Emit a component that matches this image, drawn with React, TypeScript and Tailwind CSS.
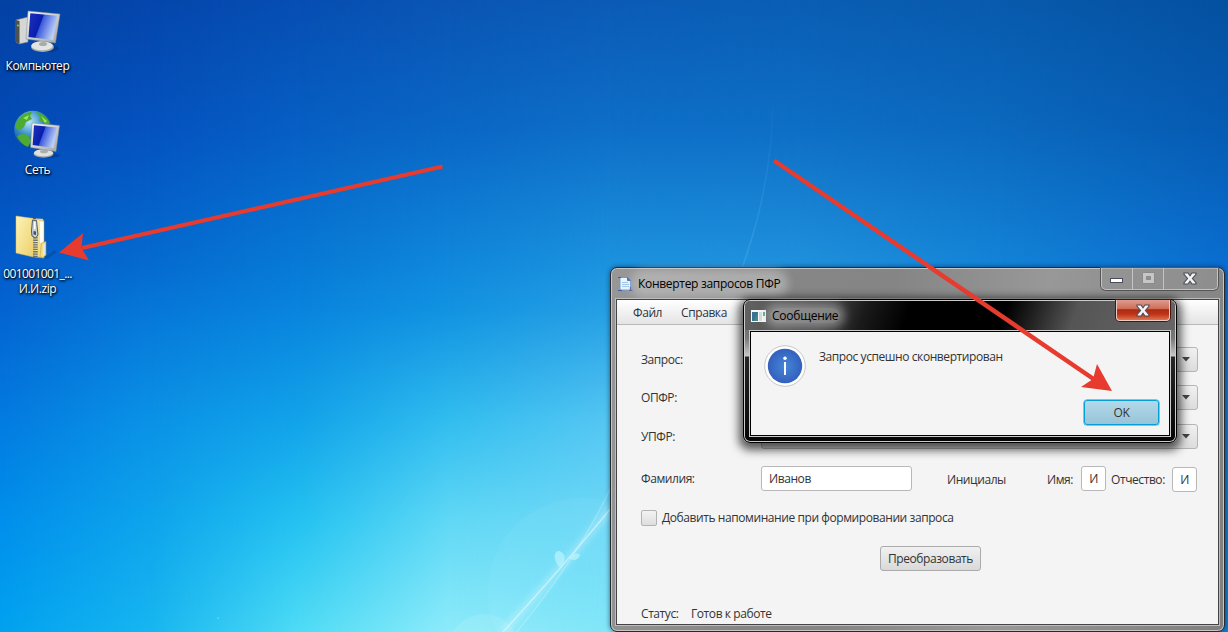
import type { ReactNode } from "react";

const SKY_ROWS = [0, 130, 265, 310, 420, 520, 632];
const SKY_COLUMNS = [
  { x: 0, colors: ["#0441a3", "#034ab7", "#045dcb", "#0464d1", "#037be0", "#008fec", "#02a2f0"] },
  { x: 150, colors: ["#0446ab", "#0453c0", "#056bd0", "#0677d8", "#0a92e6", "#0ea4ec", "#17b6f0"] },
  { x: 300, colors: ["#064eb2", "#075fc4", "#077ad6", "#0984de", "#12a3e9", "#24c2f1", "#50dcf5"] },
  { x: 450, colors: ["#0a55b4", "#0a67c5", "#1088dc", "#1293e1", "#32bdef", "#60d8f5", "#8eebfa"] },
  { x: 610, colors: ["#0b5bb6", "#0e6fc8", "#1c93de", "#269fe4", "#55c6f2", "#6fd8f6", "#80e6f8"] },
  { x: 800, colors: ["#0a5eb3", "#0e6fc6", "#2091dc", "#269ce2", "#3cb0ec", "#50c0ee", "#60c8f0"] },
  { x: 1000, colors: ["#085aad", "#0b69be", "#1383d7", "#158bdb", "#1a94e0", "#2098e0", "#209ce0"] },
  { x: 1228, colors: ["#0450a0", "#065bb2", "#0a6dd0", "#0a74d2", "#0b78d2", "#0c7cd0", "#0f80ce"] },
];

function Wallpaper() {
  return (
    <svg className="absolute inset-0" width="1228" height="632" viewBox="0 0 1228 632">
      <defs>
        {SKY_COLUMNS.map((column, i) => (
          <linearGradient key={column.x} id={`sky${i}`} gradientUnits="userSpaceOnUse" x1="0" y1="0" x2="0" y2="632">
            {column.colors.map((color, row) => (
              <stop key={row} offset={SKY_ROWS[row] / 632} stopColor={color} />
            ))}
          </linearGradient>
        ))}
        {SKY_COLUMNS.slice(1).map((column, i) => (
          <linearGradient key={column.x} id={`fade${i + 1}`} gradientUnits="userSpaceOnUse" x1={SKY_COLUMNS[i].x} y1="0" x2={column.x} y2="0">
            <stop offset="0" stopColor="#fff" stopOpacity="0" />
            <stop offset="1" stopColor="#fff" stopOpacity="1" />
          </linearGradient>
        ))}
        {SKY_COLUMNS.slice(1).map((column, i) => (
          <mask key={column.x} id={`mask${i + 1}`} maskUnits="userSpaceOnUse" x="0" y="0" width="1228" height="632">
            <rect width="1228" height="632" fill={`url(#fade${i + 1})`} />
          </mask>
        ))}
        <radialGradient id="disc" cx="0.5" cy="0.5" r="0.5">
          <stop offset="0" stopColor="#fff" stopOpacity="0" />
          <stop offset="1" stopColor="#fff" stopOpacity="0.12" />
        </radialGradient>
        <linearGradient id="arc" x1="0" y1="0" x2="0" y2="1">
          <stop offset="0" stopColor="#8cd3ff" stopOpacity="0" />
          <stop offset="1" stopColor="#8cd3ff" stopOpacity="0.2" />
        </linearGradient>
        <filter id="soft"><feGaussianBlur stdDeviation="3" /></filter>
      </defs>
      {SKY_COLUMNS.map((column, i) => (
        <rect key={column.x} width="1228" height="632" fill={`url(#sky${i})`} mask={i > 0 ? `url(#mask${i})` : undefined} />
      ))}
      <path d="M773 90Q774 180 742 268" stroke="url(#arc)" strokeWidth="1.500" fill="none" />
      <circle cx="582" cy="592" r="94" fill="url(#disc)" opacity="0.35" />
      <circle cx="484" cy="650" r="36" fill="#fff" opacity="0.1" />
      <path d="M503 632Q560 570 612 507" stroke="#fff" strokeOpacity="0.25" strokeWidth="8" fill="none" filter="url(#soft)" />
      <path d="M503 632Q560 570 612 507" stroke="#e6fbff" strokeOpacity="0.6" strokeWidth="1.300" fill="none" />
      <path d="M515 634Q580 555 612 485" stroke="#fff" strokeOpacity="0.2" strokeWidth="1.500" fill="none" />
      <path d="M561 569C553 561 553 551 559 551C565 552 567 560 561 569ZM568 558C572 552 579 553 580 555C578 561 572 561 568 558Z" fill="#b8f2fc" opacity="0.75" />
      <circle cx="218" cy="618" r="1" fill="#7fdcff" opacity="0.6" />
    </svg>
  );
}

function IconDefs() {
  return (
    <svg className="absolute" width="0" height="0">
      <defs>
        <linearGradient id="screen" x1="0" y1="0" x2="1" y2="0.35">
          <stop offset="0" stopColor="#1c31b8" />
          <stop offset="0.48" stopColor="#0a1eae" />
          <stop offset="0.52" stopColor="#3c5bdc" />
          <stop offset="1" stopColor="#b9cdf9" />
        </linearGradient>
        <linearGradient id="shell" x1="0" y1="0" x2="1" y2="1">
          <stop offset="0" stopColor="#f8f8f6" />
          <stop offset="1" stopColor="#a3a6a5" />
        </linearGradient>
        <radialGradient id="globe" cx="0.4" cy="0.3" r="0.7">
          <stop offset="0" stopColor="#b7e6f5" />
          <stop offset="0.5" stopColor="#3a8fc9" />
          <stop offset="1" stopColor="#0b3d80" />
        </radialGradient>
        <linearGradient id="folder" x1="0" y1="0" x2="1" y2="1">
          <stop offset="0" stopColor="#fdf3b8" />
          <stop offset="1" stopColor="#ecd06b" />
        </linearGradient>
      </defs>
    </svg>
  );
}

function ComputerIcon() {
  return (
    <svg width="48" height="48" viewBox="0 0 48 48">
      <path d="M2 14L14 11V36L5 38L2 36Z" fill="#d5d7d5" stroke="#7d8488" strokeWidth=".6" />
      <path d="M2 14L5.500 15V37.500L4.500 38L2 36Z" fill="#4c5153" />
      <circle cx="3.900" cy="19.500" r="1.100" fill="#5fe02a" />
      <ellipse cx="32" cy="42.500" rx="13" ry="3.500" fill="#022c70" opacity=".45" />
      <path d="M25 33L34 35V41H26Z" fill="#8e9496" />
      <ellipse cx="28.500" cy="41" rx="11.500" ry="5" fill="#a5abab" />
      <ellipse cx="28" cy="39.700" rx="10.800" ry="4.500" fill="#e3e5e4" />
      <ellipse cx="29" cy="38" rx="4" ry="2" fill="#a5abab" />
      <path d="M14 5L46 8L41.500 37L12 33Z" fill="url(#shell)" stroke="#7f8789" strokeWidth=".5" />
      <path d="M16.300 7.300L43 9.800L39.300 34L14.500 31Z" fill="url(#screen)" />
    </svg>
  );
}

function NetworkIcon() {
  return (
    <svg width="48" height="48" viewBox="0 0 48 48">
      <circle cx="19" cy="19.500" r="18.800" fill="url(#globe)" />
      <path d="M6 7C10 3 15 1.500 18 2L16 6L18 9L12 12L10 17L6 20L1 18C1.500 14 3 10 6 7ZM22 2C28 3 34 8 36 13L32 16L30 12L25 11L26 7ZM8 24L14 25L17 31L14 37C9 35 5 31 3 26Z" fill="#4cab33" />
      <path d="M9 8L15 5L13 10ZM27 6L33 11L31 13Z" fill="#a4e35a" />
      <ellipse cx="34" cy="45.500" rx="12" ry="2.500" fill="#022c70" opacity=".4" />
      <path d="M27 37L33 38V44H27Z" fill="#8e9496" />
      <ellipse cx="29.500" cy="43.800" rx="10" ry="3.900" fill="#a5abab" />
      <ellipse cx="29.500" cy="42.800" rx="9.500" ry="3.500" fill="#e0e2e1" />
      <ellipse cx="30" cy="41.500" rx="4" ry="1.800" fill="#a9aeae" />
      <path d="M18 13L45.500 15.500L42 41.500L16.500 37.500Z" fill="url(#shell)" stroke="#7f8789" strokeWidth=".5" />
      <path d="M20 15.200L42.700 17.500L39.800 38L18.700 35Z" fill="url(#screen)" />
    </svg>
  );
}

function ZipIcon() {
  return (
    <svg width="48" height="48" viewBox="0 0 48 48">
      <path d="M30 44L40 36L43 38L33 45Z" fill="#02357e" opacity=".35" />
      <path d="M11 4L29 5L30 38L12 40Z" fill="#f3eccc" stroke="#b8a964" strokeWidth=".4" />
      <path d="M20 5L30 6.500V44L20 43Z" fill="url(#folder)" stroke="#b99f45" strokeWidth=".5" />
      <path d="M26 7.500L29.500 8V29H26Z" fill="#fffdf2" />
      <path d="M2 2L19.500 4.500V43L2 39Z" fill="url(#folder)" stroke="#d2bb64" strokeWidth=".5" />
      <path d="M27.500 29L32 27.500V41L29 43.500L26 43Z" fill="#f4dc81" stroke="#b99f45" strokeWidth=".5" />
      <path d="M29 31L31 30V40L29 42Z" fill="#d3eaff" />
      <path d="M20.500 4V18" stroke="#555d66" strokeWidth="3" strokeDasharray="1 1" />
      <path d="M21.500 21V44" stroke="#6b6f6f" strokeWidth="4.500" strokeDasharray="1.300 1" />
      <path d="M18.500 6L22.500 6.500L24 21L21.500 24L18 22L17.500 17Z" fill="#c7d0d8" stroke="#505b65" strokeWidth="1" />
      <path d="M19.500 17L22 17.500V21L19.500 20.500Z" fill="#46515b" />
      <path d="M20 8L21.500 8V15H20Z" fill="#fff" />
    </svg>
  );
}

function DesktopItem({ icon, children }: { icon: ReactNode; children: ReactNode }) {
  return (
    <div className="flex h-[104px] w-[75px] shrink-0 flex-col items-center">
      {icon}
      <div className="mt-[4px] text-center leading-[15px] whitespace-nowrap text-white [text-shadow:1px_1px_2px_#000,0_1px_3px_#000]">
        {children}
      </div>
    </div>
  );
}

function CloseGlyph() {
  return (
    <svg width="14" height="13" viewBox="0 0 14 13">
      <path d="M1 1H5L7 3.800L9 1H13V2.300L9.400 6.500L13 10.700V12H9L7 9.200L5 12H1V10.700L4.600 6.500L1 2.300Z" fill="#f4f4f4" stroke="#4b4c59" strokeWidth="1.100" />
    </svg>
  );
}

function ComboBox() {
  return (
    <div className="flex h-[25px] w-[437px] items-center justify-end rounded-[3px] border border-[#b5b5b5] bg-linear-to-b from-[#f1f1f1] to-[#dcdcdc] pr-[7px]">
      <svg width="8" height="5" viewBox="0 0 8 5"><path d="M0 0H8L4 4.500Z" fill="#444" /></svg>
    </div>
  );
}

function ConverterWindow() {
  return (
    <div className="absolute top-[267px] left-[610px] flex h-[365px] w-[615px] flex-col rounded-[7px] border border-[#252a2e] bg-[linear-gradient(100deg,#979797_0%,#868686_28%,#858585_42%,#989898_65%,#7f7f7f_100%)] px-[5px] pb-[6px] shadow-[inset_0_0_0_1px_#c5c5c5,0_0_5px_rgba(0,20,45,0.6)]">
      <div className="flex h-[31px] shrink-0 items-start justify-between">
        <div className="flex items-center pt-[7px] pl-px">
          <svg width="16" height="16" viewBox="0 0 16 16">
            <path d="M3 1.500H10.500L13.500 4.500V14H3Z" fill="#e9f5ff" stroke="#6e9bd8" />
            <path d="M10.500 1.500V4.500H13.500Z" fill="#4768b6" stroke="#4768b6" />
            <path d="M5 6.500H11M5 8.500H12M5 10.500H12" stroke="#a0c5eb" />
            <path d="M1 1.500H4M1 14.500H5M12 14.500H15.500M13.500 11V15" stroke="#4659a5" strokeWidth="1.200" />
          </svg>
          <div className="ml-[3px] rounded-full bg-[#d2d2d2]/45 px-[2px] leading-[17px] tracking-[-0.3px] text-black shadow-[0_0_9px_6px_rgba(210,210,210,0.45)]">Конвертер запросов ПФР</div>
        </div>
        <div className="mr-px flex h-[22px] w-[117px] rounded-b-[5px] border border-t-0 border-[#c4c4c4] bg-[#959595]/50 shadow-[0_0_0_1px_#555]">
          <div className="flex w-[31px] items-center justify-center border-r border-[#c4c4c4]">
            <svg className="mt-[4px] mr-px" width="13" height="5" viewBox="0 0 13 5"><rect x=".5" y=".5" width="12" height="4" fill="#fff" stroke="#4b4c59" /></svg>
          </div>
          <div className="flex w-[31px] items-center justify-center border-r border-[#c4c4c4]">
            <svg className="-mt-[2px]" width="13" height="12" viewBox="0 0 13 12"><path d="M.5 .5H12.500V11.500H.5ZM4.500 4.500V7.500H8.500V4.500Z" fill="#c6c6c6" stroke="#8a8a8a" fillRule="evenodd" /></svg>
          </div>
          <div className="flex flex-1 items-center justify-center pr-px pb-px"><CloseGlyph /></div>
        </div>
      </div>
      <div className="flex flex-1 flex-col border border-[#444] bg-[#f4f4f4] leading-[16px] text-[#333] shadow-[0_0_0_1px_#bdbdbd]">
        <div className="flex h-[25px] items-center gap-[19px] border-b border-[#b9b9b9] bg-linear-to-b from-white to-[#e4e4e4] pt-[2px] pl-[16px]">
          <span>Файл</span>
          <span>Справка</span>
        </div>
        <div className="flex flex-col pl-[24px]">
          <div className="mt-[22px] flex items-center"><span className="w-[120px]">Запрос:</span><ComboBox /></div>
          <div className="mt-[13px] flex items-center"><span className="w-[120px]">ОПФР:</span><ComboBox /></div>
          <div className="mt-[14px] flex items-center"><span className="w-[120px]">УПФР:</span><ComboBox /></div>
          <div className="mt-[17px] flex h-[26px] items-start">
            <span className="w-[120px] pt-[5px]">Фамилия:</span>
            <div className="h-[25px] w-[151px] rounded-[3px] border border-[#b8b8b8] bg-white pt-[4px] pl-[7px]">Иванов</div>
            <span className="ml-[35px] w-[100px] pt-[6px]">Инициалы</span>
            <span className="w-[34px] pt-[6px]">Имя:</span>
            <div className="h-[25px] w-[25px] rounded-[3px] border border-[#b8b8b8] bg-white pt-[4px] text-center">И</div>
            <span className="ml-[5px] w-[61px] pt-[6px] whitespace-nowrap">Отчество:</span>
            <div className="mt-px h-[25px] w-[25px] rounded-[3px] border border-[#b8b8b8] bg-white pt-[4px] text-center">И</div>
          </div>
          <div className="mt-[18px] flex h-[16px] items-center gap-[5px]">
            <div className="size-[16px] rounded-[2px] border border-[#b3b3b3] bg-linear-to-b from-[#f3f3f3] to-[#dedede]" />
            <span>Добавить напоминание при формировании запроса</span>
          </div>
          <div className="mt-[20px] ml-[239px] flex h-[25px] w-[101px] items-center justify-center rounded-[3px] border border-[#ababab] bg-linear-to-b from-[#f1f1f1] to-[#d9d9d9]">Преобразовать</div>
          <div className="mt-[35px] flex"><span className="w-[50px]">Статус:</span><span>Готов к работе</span></div>
        </div>
      </div>
    </div>
  );
}

function MessageDialog() {
  return (
    <div className="absolute top-[299px] left-[743px] flex h-[144px] w-[434px] flex-col rounded-[7px] border border-black bg-[linear-gradient(180deg,#666_0px,#777_38px,#c8c8c8_56px,#262626_57px,#050505_100%)] px-[6px] pb-[6px] shadow-[inset_0_0_0_1px_#ccc,0_3px_10px_4px_rgba(0,0,0,0.65)]">
      <div className="-mx-[5px] mt-px flex h-[29px] shrink-0 items-start justify-between rounded-t-[5px] bg-[linear-gradient(110deg,#626262_0%,#474747_19%,#1a1a1a_28%,#000_38%,#000_60%,#1e1e1e_66%,#555_76%,#666_100%)] px-[5px]">
        <div className="flex items-center pt-[7px] pl-px">
          <svg width="15" height="12" viewBox="0 0 15 12">
            <rect width="15" height="12" fill="#f8f8f8" />
            <rect x="1" y="2" width="6" height="9" fill="#438b80" />
            <path d="M1 2H7L3 11H1Z" fill="#397395" />
            <rect x="8" y="2" width="3" height="9" fill="#d5dbdc" />
            <rect x="12" y="2" width="2" height="4" fill="#5ca98c" />
          </svg>
          <div className="ml-[4px] rounded-full bg-[#c4c4c4]/50 px-[2px] leading-[15px] tracking-[-0.25px] text-black shadow-[0_0_8px_5px_rgba(190,190,190,0.5)]">Сообщение</div>
        </div>
        <div className="-mt-px flex h-[21px] w-[54px] items-center justify-center rounded-b-[4px] border border-t-0 border-[#eccbc5] bg-[linear-gradient(180deg,#de9d8f_0%,#cf6b55_45%,#ae2a12_48%,#bd321a_70%,#e07350_100%)] shadow-[0_0_0_1px_#431811]"><CloseGlyph /></div>
      </div>
      <div className="mt-px flex flex-1 border border-black bg-[#f4f4f4] leading-[16px] text-[#333] shadow-[0_0_0_1px_#ccc]">
        <svg className="mt-[13px] ml-[13px] shrink-0" width="42" height="42" viewBox="0 0 42 42">
          <defs><radialGradient id="info"><stop offset="0" stopColor="#4687d8" /><stop offset="1" stopColor="#3360bd" /></radialGradient></defs>
          <circle cx="21" cy="21" r="20.300" fill="#fff" stroke="#c8c8c8" />
          <circle cx="21" cy="21" r="17.200" fill="url(#info)" />
          <circle cx="21" cy="13.200" r="1.700" fill="#fff" />
          <path d="M21 17V30" stroke="#fff" strokeWidth="2" />
        </svg>
        <div className="flex flex-1 flex-col pr-[10px] pl-[13px]">
          <div className="mt-[17px]">Запрос успешно сконвертирован</div>
          <div className="mt-[35px] flex h-[25px] w-[75px] items-center justify-center self-end rounded-[3px] border border-[#079ed5] bg-linear-to-b from-[#b2d9e9] to-[#98c4d9] shadow-[0_0_0_0.5px_#079ed5]">OK</div>
        </div>
      </div>
    </div>
  );
}

function Arrows() {
  return (
    <svg className="pointer-events-none absolute inset-0" width="1228" height="632" viewBox="0 0 1228 632">
      <g fill="#e63b2e" stroke="#e63b2e">
        <path d="M442.500 166.500L82 248" strokeWidth="4" />
        <path d="M59 252.500L83 233L81.500 248L89 260.500Z" stroke="none" />
        <path d="M774 160.500L1095 380" strokeWidth="4.500" />
        <path d="M1112 391L1081 387L1093 379L1097 364Z" stroke="none" />
      </g>
    </svg>
  );
}

export default function App() {
  return (
    <main className="relative h-[632px] w-[1228px] overflow-hidden bg-[#0b78d8] font-['Open_Sans','Noto_Sans',sans-serif] text-[12px] tracking-[-0.42px]">
      <Wallpaper />
      <IconDefs />
      <div className="relative flex w-[76px] flex-col pt-[6px]">
        <DesktopItem icon={<ComputerIcon />}>Компьютер</DesktopItem>
        <DesktopItem icon={<NetworkIcon />}>Сеть</DesktopItem>
        <DesktopItem icon={<ZipIcon />}><div className="tracking-[-0.6px]">001001001_...</div><div>И.И.zip</div></DesktopItem>
      </div>
      <ConverterWindow />
      <MessageDialog />
      <Arrows />
    </main>
  );
}
